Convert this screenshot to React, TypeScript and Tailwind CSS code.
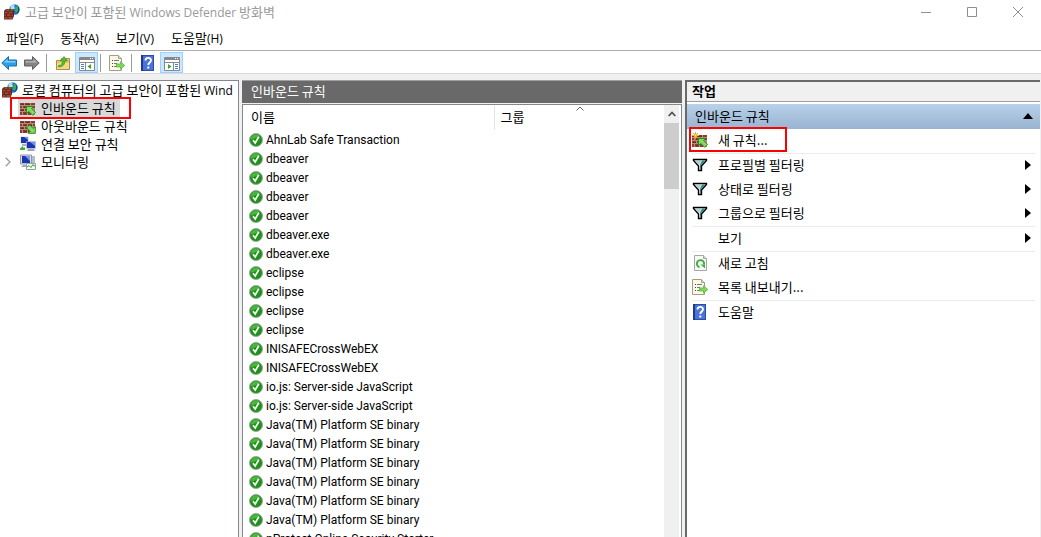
import type { ReactNode } from "react";

function GlobeWall() {
  return (
    <svg viewBox="0 0 16 16" className="size-4 shrink-0" aria-hidden="true">
      <circle cx="10.5" cy="5.5" r="5.2" fill="#1f6fc4" />
      <path d="M6.5 2.200C8 .6 10 .3 11 .6L10 2.500 11.200 4 9 6.500 6.600 5z" fill="#a9e5f5" />
      <path d="M11.500 1.500l2 1 .8 3-1.500 3-2-1.500.7-2.500z" fill="#39b24a" />
      <path d="M13.800 2.200a5.200 5.200 0 0 1-1.500 8.200c2-2.600 2.300-5 1.500-8.200z" fill="#123f86" />
      <path d="M0 7l2-2h8v7l-1.500 3.500H0z" fill="#5d241b" />
      <path d="M0.500 7.500h3v2h-3zM4.500 7.500h4v2h-4zM0.500 10.300h1.500v2H.5zM3 10.300h3.500v2H3zM7.500 10.300h1.500v2H7.500zM.5 13.100h3v2h-3zM4.500 13.100h4v2h-4z" fill="#a04634" />
      <path d="M2.500 5.500h3v1h-3zM6.500 5.500h3v1h-3z" fill="#c47b62" />
    </svg>
  );
}

function Wall({ dir, star }: { dir: "in" | "out"; star?: boolean }) {
  return (
    <svg viewBox="0 0 16 16" className="size-4 shrink-0" aria-hidden="true">
      <path d="M0 3h15v12H0z" fill="#b58c7a" />
      <path d="M0 3h4v2H0zM5 3h5v2H5zM11 3h4v2h-4zM0 6h2v2H0zM3 6h4v2H3zM8 6h4v2H8zM13 6h2v2h-2zM0 9h4v2H0zM5 9h4v2H5zM0 12h2v3H0zM3 12h4v3H3zM8 12h3v3H8z" fill="#87402f" />
      <path d="M1 4h3v1H1zM6 4h4v1H6zM4 7h3v1H4zM9 7h3v1H9zM1 10h3v1H1zM4 13h3v1H4z" fill="#6b2d22" />
      {dir === "in" ? (
        <path d="M6.500 6.500h7l-2 2 4 4-2.800 2.800-4-4-2.200 2.200z" fill="#7fdc5c" stroke="#2d8a25" strokeWidth="1" />
      ) : (
        <path d="M15.300 15.300h-7l2-2-3.500-3.500L9.600 7l3.500 3.500 2.200-2z" fill="#7fdc5c" stroke="#2d8a25" strokeWidth="1" />
      )}
      {star && (
        <g stroke="#f2a81d" strokeWidth="1">
          <path d="M3.500 0v7M0 3.500h7M1 1l5 5M6 1L1 6" />
          <circle cx="3.500" cy="3.500" r="1.300" fill="#ffe98a" />
        </g>
      )}
    </svg>
  );
}

function TwoComputers() {
  return (
    <svg viewBox="0 0 16 16" className="size-4 shrink-0" aria-hidden="true">
      <path d="M.5.500h8v7h-8z" fill="#c9d3e6" />
      <path d="M1 1h7v6H1z" fill="#1b34b4" />
      <path d="M4 1h4v3z" fill="#6d93ee" />
      <path d="M2 8h5v2H2z" fill="#aab3bf" />
      <path d="M6.500 5.500h9v7h-9z" fill="#c9d3e6" stroke="#8f9bb0" strokeWidth=".5" />
      <path d="M7 6h8v6H7z" fill="#1b34b4" />
      <path d="M10 6h5v4z" fill="#6d93ee" />
      <path d="M8 13h6l1 2H7z" fill="#9ea7b3" />
      <path d="M0 12.500l3-2.500v1.500h2v2.500H0z" fill="#3dab35" />
    </svg>
  );
}

function Monitor() {
  return (
    <svg viewBox="0 0 16 16" className="size-4 shrink-0" aria-hidden="true">
      <path d="M.5 1h11v9H.500z" fill="#d8dde6" stroke="#9098a5" />
      <path d="M2 2h8v7H2z" fill="#1d35b0" />
      <path d="M5 2h5v5z" fill="#7499ee" />
      <path d="M12 2h3v9h-3z" fill="#b7bdc6" />
      <path d="M3 11h7v2H1z" fill="#a4abb5" />
      <path d="M6.500 9.500h9v6h-9z" fill="#f4fbf4" stroke="#8fa69a" />
      <path d="M7 13l2-1.500 2 2 2-3 1 1.500h1" fill="none" stroke="#3a9d3a" />
    </svg>
  );
}

function Funnel() {
  return (
    <svg viewBox="0 0 16 16" className="size-4 shrink-0" aria-hidden="true">
      <path d="M1.500 2.500h13v1l-5 5.500v4.500h-3V9l-5-5.500z" fill="#e8eeee" stroke="#000" strokeWidth="1.400" />
      <path d="M10 3.500h3.500L9 8.500v4H8V8z" fill="#23898a" />
      <path d="M4 4h5l-2 4z" fill="#bcc4c4" />
    </svg>
  );
}

function Refresh() {
  return (
    <svg viewBox="0 0 16 16" className="size-4 shrink-0" aria-hidden="true">
      <path d="M2.500.500h9l3 3v12h-12z" fill="#f7f9f7" stroke="#a6a6a6" />
      <path d="M11.500.500v3h3" fill="#ddd" stroke="#a6a6a6" />
      <path d="M7.500 12.200A3.600 3.600 0 1 1 12 9.500" fill="none" stroke="#41b03a" strokeWidth="2" />
      <path d="M8.500 9.500h4.500v4z" fill="#41b03a" />
    </svg>
  );
}

function ExportList() {
  return (
    <svg viewBox="0 0 16 16" className="size-4 shrink-0" aria-hidden="true">
      <path d="M.5.500h9l3 3v12H.500z" fill="#fbf8e3" stroke="#a09d8c" />
      <path d="M9.500.500v3h3" fill="#e6e2c8" stroke="#a09d8c" />
      <path d="M3 5.500h1M3 8.500h1M3 11.500h1" stroke="#444" />
      <path d="M5 5.500h5M5 8.500h3M5 11.500h3" stroke="#6c7890" />
      <path d="M7.500 9h4V6.800l4.300 3.700-4.300 3.700V12h-4z" fill="#7cda58" stroke="#4db134" strokeWidth=".7" />
    </svg>
  );
}

function Help() {
  return (
    <svg viewBox="0 0 16 16" className="size-4 shrink-0" aria-hidden="true">
      <path d="M1 0h13v16H1z" fill="#2a4cab" />
      <path d="M3 1h10v14H3z" fill="#4a74d8" />
      <path d="M1 0h2v16H1z" fill="#1d3a91" />
      <path d="M5.500 5.500c0-3.400 5.500-3.400 5.500-.3 0 2.300-2.700 2.200-2.700 4.800" fill="none" stroke="#fff" strokeWidth="1.900" />
      <path d="M7.300 11.500h2v2h-2z" fill="#fff" />
    </svg>
  );
}

function Arrow({ back }: { back?: boolean }) {
  return (
    <svg viewBox="0 0 16 16" className="size-4 shrink-0" aria-hidden="true">
      {back ? (
        <>
          <path d="M.800 8L7.500 1.500V5h8v6h-8v3.500z" fill="#2f9fe2" stroke="#1b6fb0" />
          <path d="M2.800 7.500L6.500 4v2h8v1.500z" fill="#7fd0f7" />
        </>
      ) : (
        <>
          <path d="M15.200 8L8.500 1.500V5h-8v6h8v3.500z" fill="#858585" stroke="#5f5f5f" />
          <path d="M13.200 7.500L9.500 4v2h-8v1.500z" fill="#b2b2b2" />
        </>
      )}
    </svg>
  );
}

function FolderUp() {
  return (
    <svg viewBox="0 0 16 16" className="size-4 shrink-0" aria-hidden="true">
      <path d="M1.500 5.500h4l1-2h8v11h-13z" fill="#e9c66f" stroke="#b68d37" />
      <path d="M2 8h12v6H2z" fill="#f3d88c" />
      <path d="M3.500 10.500c3 0 4-2 4-4.500H5.300L9 1.500 12.500 6H10c0 3.500-2.500 6-6.500 6z" fill="#4ebd38" stroke="#2f8f20" strokeWidth=".6" />
    </svg>
  );
}

function PaneIcon({ side }: { side: "left" | "right" }) {
  return (
    <svg viewBox="0 0 16 16" className="size-4 shrink-0" aria-hidden="true">
      <path d="M.5 2.500h15v13H.500z" fill="#fff" stroke="#85898e" />
      <path d="M1 3h14v2H1z" fill="#85898e" />
      <path d="M11 3.500h1M13 3.500h1" stroke="#fff" />
      <path d="M0 7.500h16" stroke="#85898e" />
      {side === "left" ? (
        <>
          <path d="M6.500 8v7" stroke="#85898e" />
          <path d="M2 9.500h3M2 11.500h3M2 13.500h3" stroke="#4d7dc4" />
          <path d="M12 9v5l-3.500-2.500z" fill="#3aa52c" />
        </>
      ) : (
        <>
          <path d="M9.500 8v7" stroke="#85898e" />
          <path d="M11 9.500h3M11 11.500h3M11 13.500h3" stroke="#4d7dc4" />
          <path d="M4 9v5l3.500-2.500z" fill="#3aa52c" />
        </>
      )}
    </svg>
  );
}

function Check() {
  return (
    <svg viewBox="0 0 14 14" className="size-3.5 shrink-0" aria-hidden="true">
      <circle cx="7" cy="7" r="6.500" fill="#1d9119" stroke="#9fa99f" />
      <path d="M2 6.500a5 5 0 0 1 9-3.200C8 4 5 6.500 2 6.500z" fill="#4ab640" />
      <path d="M4 7.300l2.200 2.700L9.800 3.800" fill="none" stroke="#fff" strokeWidth="1.700" />
    </svg>
  );
}

const rules = [
  "AhnLab Safe Transaction",
  "dbeaver",
  "dbeaver",
  "dbeaver",
  "dbeaver",
  "dbeaver.exe",
  "dbeaver.exe",
  "eclipse",
  "eclipse",
  "eclipse",
  "eclipse",
  "INISAFECrossWebEX",
  "INISAFECrossWebEX",
  "io.js: Server-side JavaScript",
  "io.js: Server-side JavaScript",
  "Java(TM) Platform SE binary",
  "Java(TM) Platform SE binary",
  "Java(TM) Platform SE binary",
  "Java(TM) Platform SE binary",
  "Java(TM) Platform SE binary",
  "Java(TM) Platform SE binary",
  "nProtect Online Security Starter",
];

const menus = [
  { label: "파일", accessKey: "F" },
  { label: "동작", accessKey: "A" },
  { label: "보기", accessKey: "V" },
  { label: "도움말", accessKey: "H" },
];

const tree: { label: string; icon: ReactNode; selected?: boolean; expandable?: boolean }[] = [
  { label: "인바운드 규칙", icon: <Wall dir="in" />, selected: true },
  { label: "아웃바운드 규칙", icon: <Wall dir="out" /> },
  { label: "연결 보안 규칙", icon: <TwoComputers /> },
  { label: "모니터링", icon: <Monitor />, expandable: true },
];

function Latin({ children }: { children: ReactNode }) {
  return <span className="font-['Open_Sans',sans-serif] text-[12px]">{children}</span>;
}

function Action({ icon, label, more, marked }: { icon?: ReactNode; label: string; more?: boolean; marked?: boolean }) {
  return (
    <button type="button" className="relative flex h-6 w-full items-center pb-0.5 pr-1 text-left">
      <span className="flex w-[26px] shrink-0">{icon}</span>
      <span className="flex-1">{label}</span>
      {more && (
        <svg viewBox="0 0 6 10" className="h-2.5 w-1.5" aria-hidden="true">
          <path d="M0 0l6 5-6 5z" />
        </svg>
      )}
      {marked && <span className="absolute -left-[3px] -top-0.5 h-[25px] w-[98px] border-2 border-[#ff0000]" />}
    </button>
  );
}

function Divider() {
  return <hr className="border-[#ececec]" />;
}

function ToolSeparator() {
  return <span className="h-[18px] w-px bg-[#9a9a9a]" />;
}

export default function App() {
  return (
    <div className="flex h-screen flex-col overflow-hidden bg-[#f0f0f0] font-['Noto_Sans_CJK_KR',sans-serif] text-[13px] leading-[18px] text-black">
      <header className="flex h-6 shrink-0 items-center bg-white pl-1">
        <GlobeWall />
        <h1 className="ml-[5px] flex-1 text-[#999999]">
          고급 보안이 포함된 <Latin>Windows Defender</Latin> 방화벽
        </h1>
        <div className="flex text-[#8f8f8f]">
          <button type="button" aria-label="최소화" className="flex h-6 w-[46px] items-center justify-center">
            <svg viewBox="0 0 10 10" className="size-2.5"><path d="M0 5.500h10" stroke="currentColor" /></svg>
          </button>
          <button type="button" aria-label="최대화" className="flex h-6 w-[46px] items-center justify-center">
            <svg viewBox="0 0 10 10" className="size-2.5"><path d="M.5.500h9v9h-9z" fill="none" stroke="currentColor" /></svg>
          </button>
          <button type="button" aria-label="닫기" className="flex h-6 w-[46px] items-center justify-center">
            <svg viewBox="0 0 10 10" className="size-2.5"><path d="M0 0l10 10M10 0L0 10" stroke="currentColor" /></svg>
          </button>
        </div>
      </header>

      <nav className="flex h-[27px] shrink-0 items-center gap-[17px] border-b border-[#adadad] bg-white px-1.5 pt-0.5">
        {menus.map((menu) => (
          <button key={menu.label} type="button">
            {menu.label}
            <Latin>({menu.accessKey})</Latin>
          </button>
        ))}
      </nav>

      <div className="flex h-[23px] shrink-0 items-center border-b border-[#d9d9d9] bg-white pl-px pt-px">
        <button type="button" aria-label="뒤로" className="mr-[7px]"><Arrow back /></button>
        <button type="button" aria-label="앞으로" className="mr-1.5"><Arrow /></button>
        <ToolSeparator />
        <button type="button" aria-label="위로" className="ml-2 mr-1"><FolderUp /></button>
        <button type="button" aria-label="콘솔 트리" className="flex h-[21px] w-[23px] items-center justify-center border border-[#99d1ff] bg-[#cce8ff]">
          <PaneIcon side="left" />
        </button>
        <span className="ml-0.5 flex items-center gap-2">
          <ToolSeparator />
          <button type="button" aria-label="목록 내보내기"><ExportList /></button>
        </span>
        <span className="ml-1.5 flex items-center gap-2">
          <ToolSeparator />
          <button type="button" aria-label="도움말"><Help /></button>
        </span>
        <button type="button" aria-label="작업 창" className="ml-1 flex h-[21px] w-[23px] items-center justify-center border border-[#99d1ff] bg-[#cce8ff]">
          <PaneIcon side="right" />
        </button>
      </div>

      <main className="flex min-h-0 flex-1 gap-[3px] pt-1.5">
        <aside className="w-[239px] shrink-0 overflow-hidden border-r border-t border-[#828790] bg-white">
          <button type="button" className="flex h-[18px] items-center gap-1 whitespace-nowrap pl-0.5">
            <GlobeWall />
            <span>
              로컬 컴퓨터의 고급 보안이 포함된 <Latin>Wind</Latin>
            </span>
          </button>
          <ul>
            {tree.map((item) => (
              <li key={item.label} className="relative flex h-[18px] items-center pl-[5px]">
                <span className="w-[13px]">
                  {item.expandable && (
                    <svg viewBox="0 0 6 10" className="h-2.5 w-1.5" aria-hidden="true">
                      <path d="M.7.700L5 5 .7 9.300" fill="none" stroke="#a0a0a0" strokeWidth="1.400" />
                    </svg>
                  )}
                </span>
                <button
                  type="button"
                  className={
                    item.selected
                      ? "flex h-[18px] items-center gap-[5px] bg-[#d9d9d9] pl-0.5 pr-1"
                      : "flex h-[18px] items-center gap-[5px] pl-0.5 pr-1"
                  }
                >
                  {item.icon}
                  {item.label}
                </button>
                {item.selected && <span className="absolute -top-0.5 left-2.5 h-[22px] w-[121px] border-2 border-[#ff0000]" />}
              </li>
            ))}
          </ul>
        </aside>

        <section className="flex min-w-0 flex-1 flex-col">
          <h2 className="h-[23px] shrink-0 border-t border-[#a0a0a0] bg-[#696969] pl-[9px] leading-[20px] text-white">인바운드 규칙</h2>
          <div className="mt-px flex min-h-0 flex-1 border-x border-t border-[#828790] bg-white pr-px">
            <div className="min-w-0 flex-1 overflow-hidden">
              <table className="w-full table-fixed border-collapse text-left">
                <thead>
                  <tr className="h-[25px]">
                    <th className="w-[251px] border-r border-[#e5e5e5] p-0 pb-0.5 pl-2 font-normal">이름</th>
                    <th className="relative p-0 pb-0.5 pl-1.5 font-normal">
                      그룹
                      <svg viewBox="0 0 8 5" className="absolute left-[81px] top-px h-[5px] w-2" aria-hidden="true">
                        <path d="M.5 4.500L4 1l3.500 3.500" fill="none" stroke="#666" />
                      </svg>
                    </th>
                  </tr>
                </thead>
                <tbody className="font-['Roboto','Noto_Sans_CJK_KR',sans-serif] text-[12px]">
                  {rules.map((rule, i) => (
                    <tr key={i} className="h-[19px]">
                      <td className="p-0 pl-1.5">
                        <span className="flex items-center gap-[3px] whitespace-nowrap"><Check />{rule}</span>
                      </td>
                      <td className="p-0" />
                    </tr>
                  ))}
                </tbody>
              </table>
            </div>
            <div className="mr-px flex w-[15px] shrink-0 flex-col bg-[#f0f0f0]">
              <button type="button" aria-label="위로 스크롤" className="flex h-[18px] items-center justify-center">
                <svg viewBox="0 0 8 6" className="h-1.5 w-2"><path d="M.7 5L4 1.500 7.300 5" fill="none" stroke="#505050" strokeWidth="1.800" /></svg>
              </button>
              <div className="h-[66px] bg-[#cdcdcd]" />
            </div>
          </div>
        </section>

        <aside className="mr-px w-[355px] shrink-0 border-l-2 border-t-2 border-[#696969] bg-white">
          <h2 className="h-5 border-b border-[#a0a0a0] bg-[#f0f0f0] pl-[5px] font-bold">작업</h2>
          <div className="mt-0.5 flex h-[25px] items-center justify-between bg-linear-to-b from-[#b9d1ea] to-[#99b4d1] pb-px pl-2 pr-[7px]">
            인바운드 규칙
            <svg viewBox="0 0 10 6" className="h-1.5 w-2.5" aria-hidden="true"><path d="M5 0l5 6H0z" /></svg>
          </div>
          <div className="px-[5px]">
            <Action icon={<Wall dir="in" star />} label="새 규칙..." marked />
            <Divider />
            <Action icon={<Funnel />} label="프로필별 필터링" more />
            <Action icon={<Funnel />} label="상태로 필터링" more />
            <Action icon={<Funnel />} label="그룹으로 필터링" more />
            <Divider />
            <Action label="보기" more />
            <Divider />
            <Action icon={<Refresh />} label="새로 고침" />
            <Action icon={<ExportList />} label="목록 내보내기..." />
            <Divider />
            <Action icon={<Help />} label="도움말" />
          </div>
        </aside>
      </main>
    </div>
  );
}
